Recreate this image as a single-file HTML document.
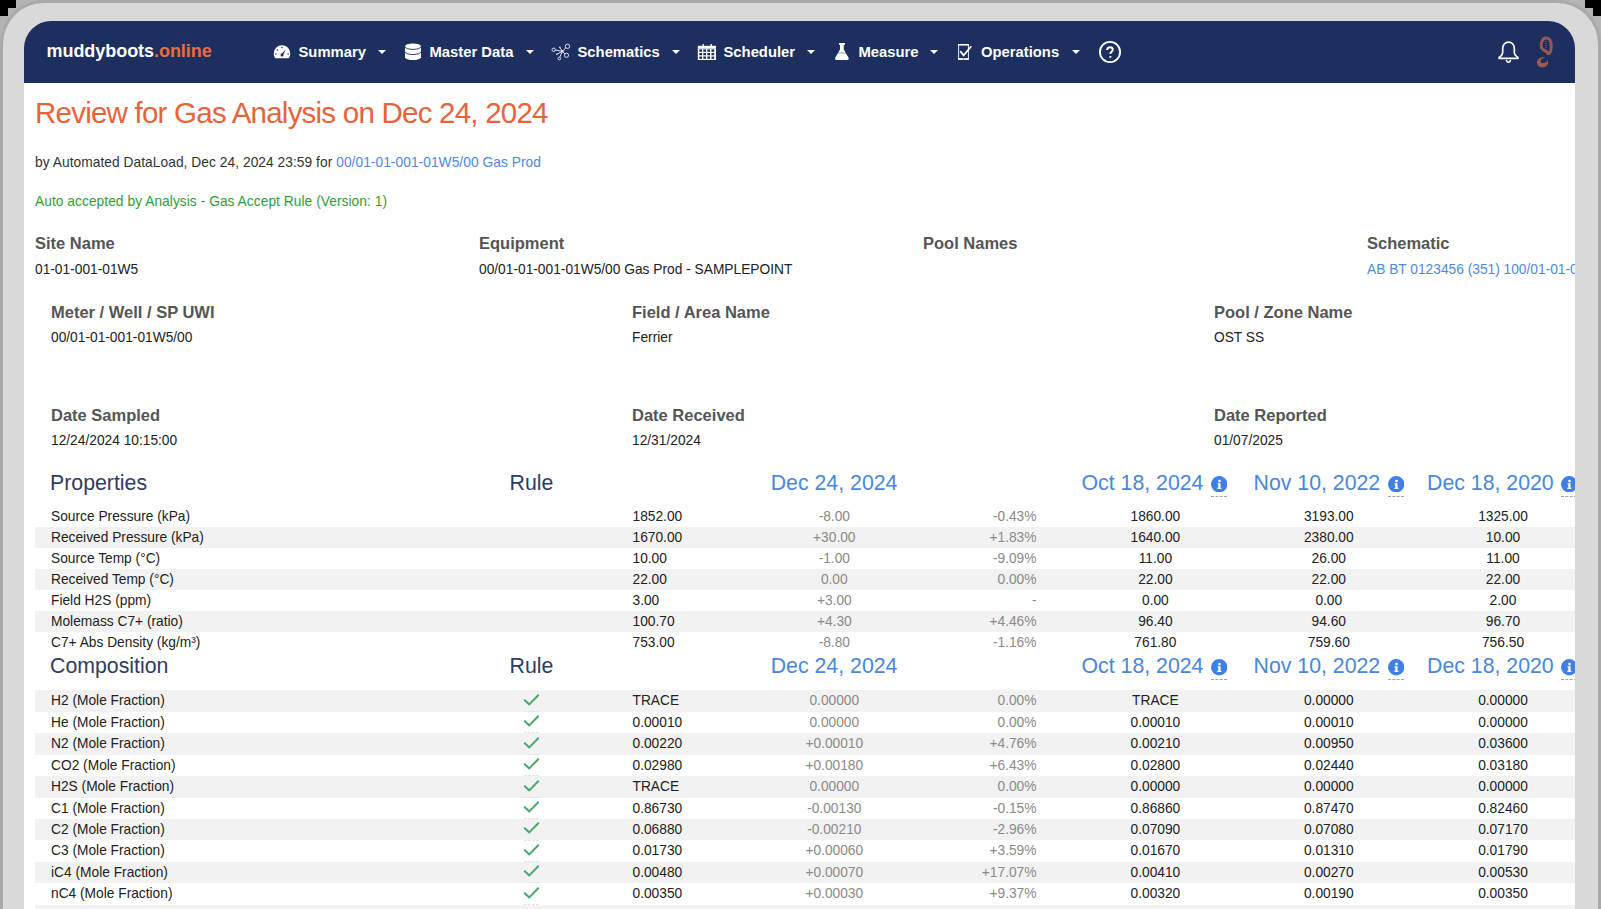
<!DOCTYPE html>
<html><head><meta charset="utf-8">
<style>
html,body{margin:0;padding:0;width:1601px;height:909px;overflow:hidden;background:#b4b4b4;}
body{position:relative;font-family:"Liberation Sans",sans-serif;}
.cornerTL{position:absolute;left:0;top:0;width:16px;height:8px;background:#000}
.frame{position:absolute;left:0;top:0;width:1595px;height:1000px;border:3px solid #a9a9a9;border-bottom:none;border-radius:44px 44px 0 0;background:#d9d9d9;}
.content{position:absolute;left:24px;top:21px;width:1551px;height:900px;background:#fff;border-radius:27px 27px 0 0;overflow:hidden;}
.inner{position:absolute;left:-24px;top:-21px;width:1601px;height:930px;}
.hdr{position:absolute;left:24px;top:21px;width:1551px;height:62px;background:#1d2f5e;}
.t{position:absolute;white-space:nowrap;}
.caret{position:absolute;width:0;height:0;border-left:4px solid transparent;border-right:4px solid transparent;border-top:4.5px solid #fff;}
.ic{position:absolute;}
.stripe{position:absolute;left:35px;width:1540px;background:#f2f2f2;}
.info{position:absolute;width:16px;height:16px;border-radius:50%;background:#4a86e0;color:#fff;font-weight:bold;font-size:11px;line-height:16px;text-align:center;font-family:"Liberation Serif",serif;}
.dots{position:absolute;width:16px;height:0;border-top:1px dashed #9aa;}
.dots2{position:absolute;width:15px;height:0;border-top:1px dashed #e6e6e6;}
</style></head><body>
<div class="cornerTL"></div>
<div style="position:absolute;left:0;top:0;width:8px;height:16px;background:#000"></div>
<div style="position:absolute;right:0;top:0;width:16px;height:8px;background:#000"></div>
<div style="position:absolute;right:0;top:0;width:8px;height:16px;background:#000"></div>
<div class="frame"></div>
<div class="content"><div class="inner">
<div class="hdr"></div>
<div class="t" style="top:42.26px;font-size:18px;line-height:18px;color:#fff;font-weight:bold;letter-spacing:-0.05px;left:46.5px;">muddyboots<span style="color:#ec6a3c">.online</span></div>
<div class="t" style="top:45.17px;font-size:14.8px;line-height:14.8px;color:#fff;font-weight:bold;left:298.5px;">Summary</div>
<div class="t" style="top:45.17px;font-size:14.8px;line-height:14.8px;color:#fff;font-weight:bold;left:429.5px;">Master Data</div>
<div class="t" style="top:45.17px;font-size:14.8px;line-height:14.8px;color:#fff;font-weight:bold;left:577.5px;">Schematics</div>
<div class="t" style="top:45.17px;font-size:14.8px;line-height:14.8px;color:#fff;font-weight:bold;left:723.5px;">Scheduler</div>
<div class="t" style="top:45.17px;font-size:14.8px;line-height:14.8px;color:#fff;font-weight:bold;left:858.5px;">Measure</div>
<div class="t" style="top:45.17px;font-size:14.8px;line-height:14.8px;color:#fff;font-weight:bold;left:981px;">Operations</div>
<div class="caret" style="left:378px;top:50px"></div>
<div class="caret" style="left:525.75px;top:50px"></div>
<div class="caret" style="left:672px;top:50px"></div>
<div class="caret" style="left:807px;top:50px"></div>
<div class="caret" style="left:930px;top:50px"></div>
<div class="caret" style="left:1072px;top:50px"></div>
<svg class="ic" style="left:273px;top:44px" width="18" height="16" viewBox="0 0 18 16">
<path d="M9 1.2A8.2 8.2 0 0 0 0.8 9.4c0 1.8.5 3.4 1.5 4.8H15.7c1-1.4 1.5-3 1.5-4.8A8.2 8.2 0 0 0 9 1.2z" fill="#fff"/>
<path d="M8 10.6 L12.6 5.4 L10 11.6z" fill="#1d2f5e"/>
<circle cx="9" cy="11" r="1.5" fill="#1d2f5e"/>
<circle cx="4.3" cy="6" r="0.75" fill="#1d2f5e"/><circle cx="9" cy="3.6" r="0.75" fill="#1d2f5e"/><circle cx="2.9" cy="10" r="0.75" fill="#1d2f5e"/><circle cx="15.1" cy="10" r="0.75" fill="#1d2f5e"/>
</svg>
<svg class="ic" style="left:405px;top:43px" width="16" height="18" viewBox="0 0 16 18">
<path d="M0 3.3A8 2.9 0 0 1 16 3.3V14.2A8 2.9 0 0 1 0 14.2Z" fill="#fff"/>
<path d="M0 3.6A8 2.8 0 0 0 16 3.6M0 8.7A8 2.8 0 0 0 16 8.7" fill="none" stroke="#1d2f5e" stroke-width="0.9"/>
</svg>
<svg class="ic" style="left:551px;top:43px" width="20" height="18" viewBox="0 0 20 18" fill="none" stroke="#dde5f5" stroke-width="0.95">
<circle cx="2.7" cy="6.8" r="1.7"/><circle cx="16.5" cy="3.3" r="2.2"/><circle cx="15.5" cy="12.3" r="2.1"/><circle cx="8.3" cy="15.5" r="1.35"/>
<path d="M4.4 7 L11.4 8.3 M11.4 8.3 L14.9 4.8 M11.4 8.3 L13.9 10.9 M11.4 8.3 L8.8 14.1 M11.4 8.3 L9 4.6 M11.4 8.3 L5.8 11.3"/>
<circle cx="11.4" cy="8.3" r="1.2" fill="#dde5f5" stroke="none"/>
<circle cx="8.9" cy="4.4" r="0.8" fill="#dde5f5" stroke="none"/><circle cx="5.7" cy="11.3" r="0.8" fill="#dde5f5" stroke="none"/>
</svg>
<svg class="ic" style="left:697px;top:43px" width="20" height="18" viewBox="0 0 20 18">
<rect x="0.8" y="2.8" width="18.2" height="14.2" fill="#fff"/>
<rect x="5.5" y="1" width="1.5" height="2" fill="#dfe6f3"/><rect x="13.5" y="1" width="1.5" height="2" fill="#dfe6f3"/>
<g fill="#1d2f5e">
<rect x="2.3" y="6.4" width="2.7" height="2.4"/><rect x="6.3" y="6.4" width="2.7" height="2.4"/><rect x="10.3" y="6.4" width="2.7" height="2.4"/><rect x="14.5" y="6.4" width="2.7" height="2.4"/>
<rect x="2.3" y="10" width="2.7" height="2.3"/><rect x="6.3" y="10" width="2.7" height="2.3"/><rect x="10.3" y="10" width="2.7" height="2.3"/><rect x="14.5" y="10" width="2.7" height="2.3"/>
<rect x="2.3" y="13.5" width="2.7" height="2.3"/><rect x="6.3" y="13.5" width="2.7" height="2.3"/><rect x="10.3" y="13.5" width="2.7" height="2.3"/><rect x="14.5" y="13.5" width="2.7" height="2.3"/>
</g>
<rect x="0.8" y="5" width="18.2" height="0.5" fill="#9aa6c0"/>
</svg>
<svg class="ic" style="left:830px;top:40px" width="26" height="24" viewBox="0 0 26 24">
<path d="M9 2.9H15V4.7H13.8V9.4L18.4 17.6C19.1 18.9 18.8 19.9 17.4 19.9H6.4C5 19.9 4.7 18.9 5.4 17.6L10 9.4V4.7H9Z" fill="#fff"/>
<path d="M8 13 Q12 12.4 16 13.4" fill="none" stroke="#1d2f5e" stroke-width="0.6" opacity="0.8"/>
</svg>
<svg class="ic" style="left:956px;top:43px" width="18" height="18" viewBox="0 0 18 18">
<rect x="2.6" y="1.6" width="9.8" height="14.6" fill="none" stroke="#e6ecf7" stroke-width="1"/>
<rect x="2.1" y="1" width="10.8" height="1.5" fill="#fff"/>
<rect x="2.1" y="15.2" width="10.8" height="1.6" fill="#fff"/>
<rect x="7.3" y="15.2" width="0.5" height="1.6" fill="#1d2f5e"/>
<path d="M4.2 8.1L7.6 12.3L15.3 3.2" fill="none" stroke="#fff" stroke-width="1.7"/>
</svg>
<svg class="ic" style="left:1098px;top:40px" width="24" height="24" viewBox="0 0 24 24">
<circle cx="12" cy="12" r="10.1" fill="none" stroke="#fff" stroke-width="1.9"/>
<path d="M9.1 10.1C9.1 8.1 10.3 7.2 12 7.2C13.7 7.2 14.8 8.3 14.8 9.7C14.8 11.6 12.4 11.7 12.4 13.4V14" fill="none" stroke="#fff" stroke-width="1.9"/>
<rect x="11.4" y="16" width="1.9" height="1.8" fill="#fff"/>
</svg>
<svg class="ic" style="left:1497px;top:40px" width="23" height="25" viewBox="0 0 23 25">
<path d="M11.5 2.2c-3.6 0-5.8 2.7-5.8 6.4v3.5c0 2.3-1 3.9-3.7 5.3v.9h19v-.9c-2.7-1.4-3.7-3-3.7-5.3V8.6c0-3.7-2.2-6.4-5.8-6.4z" fill="none" stroke="#fff" stroke-width="1.7" stroke-linejoin="round"/>
<path d="M9.6 20.6c.3 1.1 1 1.6 1.9 1.6s1.6-.5 1.9-1.6" fill="none" stroke="#fff" stroke-width="1.6" stroke-linecap="round"/>
</svg>
<svg class="ic" style="left:1535px;top:35px" width="20" height="34" viewBox="0 0 20 34">
<path d="M11 3C14.3 3 16.2 6.3 16.2 10.4C16.2 14.2 15.5 17.6 14.1 18.4C13.1 19 12.3 17.6 11.6 16.8C10.6 15.9 6.8 14.9 6.2 11.7C5.7 7.6 7.6 3 11 3Z" fill="none" stroke="#a9594f" stroke-width="2.9"/>
<path d="M11 3C14.3 3 16.2 6.3 16.2 10.4C16.2 14.2 15.5 17.6 14.1 18.4C13.1 19 12.3 17.6 11.6 16.8C10.6 15.9 6.8 14.9 6.2 11.7C5.7 7.6 7.6 3 11 3Z" fill="none" stroke="#1d2f5e" stroke-width="0.7" stroke-dasharray="0.8 1.6" opacity="0.8"/>
<path d="M10.9 6V15" stroke="#5a5470" stroke-width="1.6" stroke-dasharray="1 1"/>
<ellipse cx="7.5" cy="27.3" rx="5.6" ry="5.1" fill="#aa5b4d"/>
<ellipse cx="8.8" cy="25.6" rx="3.4" ry="2.4" fill="#1d2f5e" transform="rotate(-25 8.8 25.6)"/>
<ellipse cx="7.5" cy="27.3" rx="4.3" ry="3.9" fill="none" stroke="#1d2f5e" stroke-width="0.6" stroke-dasharray="0.8 1.4" opacity="0.7"/>
</svg>
<div class="t" style="top:98.03px;font-size:29.5px;line-height:29.5px;color:#e8633a;letter-spacing:-0.77px;left:35px;">Review for Gas Analysis on Dec 24, 2024</div>
<div class="t" style="top:155.56px;font-size:13.75px;line-height:13.75px;color:#333;letter-spacing:0.05px;left:35px;">by Automated DataLoad, Dec 24, 2024 23:59 for <span style="color:#4d8ae0">00/01-01-001-01W5/00 Gas Prod</span></div>
<div class="t" style="top:194.66px;font-size:13.75px;line-height:13.75px;color:#2e9e3a;letter-spacing:0.05px;left:35px;">Auto accepted by Analysis - Gas Accept Rule (Version: 1)</div>
<div class="t" style="top:235.03px;font-size:16.5px;line-height:16.5px;color:#555;font-weight:bold;left:35px;">Site Name</div>
<div class="t" style="top:262.86px;font-size:13.75px;line-height:13.75px;color:#222;left:35px;">01-01-001-01W5</div>
<div class="t" style="top:235.03px;font-size:16.5px;line-height:16.5px;color:#555;font-weight:bold;left:479px;">Equipment</div>
<div class="t" style="top:262.86px;font-size:13.75px;line-height:13.75px;color:#222;left:479px;">00/01-01-001-01W5/00 Gas Prod - SAMPLEPOINT</div>
<div class="t" style="top:235.03px;font-size:16.5px;line-height:16.5px;color:#555;font-weight:bold;left:923px;">Pool Names</div>
<div class="t" style="top:235.03px;font-size:16.5px;line-height:16.5px;color:#555;font-weight:bold;left:1367px;">Schematic</div>
<div class="t" style="top:262.86px;font-size:13.75px;line-height:13.75px;color:#4d8ae0;left:1367px;">AB BT 0123456 (351) 100/01-01-001-01W5/00 Gas Prod</div>
<div class="t" style="top:303.78px;font-size:16.5px;line-height:16.5px;color:#555;font-weight:bold;left:51px;">Meter / Well / SP UWI</div>
<div class="t" style="top:331.36px;font-size:13.75px;line-height:13.75px;color:#222;left:51px;">00/01-01-001-01W5/00</div>
<div class="t" style="top:303.78px;font-size:16.5px;line-height:16.5px;color:#555;font-weight:bold;left:632px;">Field / Area Name</div>
<div class="t" style="top:331.36px;font-size:13.75px;line-height:13.75px;color:#222;left:632px;">Ferrier</div>
<div class="t" style="top:303.78px;font-size:16.5px;line-height:16.5px;color:#555;font-weight:bold;left:1214px;">Pool / Zone Name</div>
<div class="t" style="top:331.36px;font-size:13.75px;line-height:13.75px;color:#222;left:1214px;">OST SS</div>
<div class="t" style="top:407.03px;font-size:16.5px;line-height:16.5px;color:#555;font-weight:bold;left:51px;">Date Sampled</div>
<div class="t" style="top:434.36px;font-size:13.75px;line-height:13.75px;color:#222;left:51px;">12/24/2024 10:15:00</div>
<div class="t" style="top:407.03px;font-size:16.5px;line-height:16.5px;color:#555;font-weight:bold;left:632px;">Date Received</div>
<div class="t" style="top:434.36px;font-size:13.75px;line-height:13.75px;color:#222;left:632px;">12/31/2024</div>
<div class="t" style="top:407.03px;font-size:16.5px;line-height:16.5px;color:#555;font-weight:bold;left:1214px;">Date Reported</div>
<div class="t" style="top:434.36px;font-size:13.75px;line-height:13.75px;color:#222;left:1214px;">01/07/2025</div>
<div class="t" style="top:472.57px;font-size:21.3px;line-height:21.3px;color:#2f3c62;left:50px;">Properties</div>
<div class="t" style="top:472.57px;font-size:21.3px;line-height:21.3px;color:#2f3c62;left:509.5px;">Rule</div>
<div class="t" style="top:472.57px;font-size:21.3px;line-height:21.3px;color:#4a86dc;left:534.1px;width:600px;text-align:center;">Dec 24, 2024</div>
<div class="t" style="top:472.57px;font-size:21.3px;line-height:21.3px;color:#4a86dc;left:1081.5px;">Oct 18, 2024</div>
<svg class="ic" style="left:1211px;top:476.10px" width="16.4" height="16.4" viewBox="0 0 16 16"><circle cx="8" cy="8" r="8" fill="#4080e6"/><circle cx="8.3" cy="4.9" r="1.35" fill="#fff"/><path d="M6.3 7H9.3V11.5H10.1V12.6H6.2V11.5H7.1V8.1H6.3Z" fill="#fff"/></svg>
<div class="dots" style="left:1211px;top:496.10px"></div>
<div class="t" style="top:472.57px;font-size:21.3px;line-height:21.3px;color:#4a86dc;left:1253.5px;">Nov 10, 2022</div>
<svg class="ic" style="left:1387.5px;top:476.10px" width="16.4" height="16.4" viewBox="0 0 16 16"><circle cx="8" cy="8" r="8" fill="#4080e6"/><circle cx="8.3" cy="4.9" r="1.35" fill="#fff"/><path d="M6.3 7H9.3V11.5H10.1V12.6H6.2V11.5H7.1V8.1H6.3Z" fill="#fff"/></svg>
<div class="dots" style="left:1387.5px;top:496.10px"></div>
<div class="t" style="top:472.57px;font-size:21.3px;line-height:21.3px;color:#4a86dc;left:1427px;">Dec 18, 2020</div>
<svg class="ic" style="left:1561px;top:476.10px" width="16.4" height="16.4" viewBox="0 0 16 16"><circle cx="8" cy="8" r="8" fill="#4080e6"/><circle cx="8.3" cy="4.9" r="1.35" fill="#fff"/><path d="M6.3 7H9.3V11.5H10.1V12.6H6.2V11.5H7.1V8.1H6.3Z" fill="#fff"/></svg>
<div class="dots" style="left:1561px;top:496.10px"></div>
<div class="t" style="top:509.96px;font-size:13.75px;line-height:13.75px;color:#222;left:51px;">Source Pressure (kPa)</div>
<div class="t" style="top:509.96px;font-size:13.75px;line-height:13.75px;color:#222;left:632.5px;">1852.00</div>
<div class="t" style="top:509.96px;font-size:13.75px;line-height:13.75px;color:#8a8a8a;left:534.3px;width:600px;text-align:center;">-8.00</div>
<div class="t" style="top:509.96px;font-size:13.75px;line-height:13.75px;color:#8a8a8a;left:436.5px;width:600px;text-align:right;">-0.43%</div>
<div class="t" style="top:509.96px;font-size:13.75px;line-height:13.75px;color:#222;left:855.4000000000001px;width:600px;text-align:center;">1860.00</div>
<div class="t" style="top:509.96px;font-size:13.75px;line-height:13.75px;color:#222;left:1028.8px;width:600px;text-align:center;">3193.00</div>
<div class="t" style="top:509.96px;font-size:13.75px;line-height:13.75px;color:#222;left:1203px;width:600px;text-align:center;">1325.00</div>
<div class="stripe" style="top:527.00px;height:21.00px"></div>
<div class="t" style="top:530.96px;font-size:13.75px;line-height:13.75px;color:#222;left:51px;">Received Pressure (kPa)</div>
<div class="t" style="top:530.96px;font-size:13.75px;line-height:13.75px;color:#222;left:632.5px;">1670.00</div>
<div class="t" style="top:530.96px;font-size:13.75px;line-height:13.75px;color:#8a8a8a;left:534.3px;width:600px;text-align:center;">+30.00</div>
<div class="t" style="top:530.96px;font-size:13.75px;line-height:13.75px;color:#8a8a8a;left:436.5px;width:600px;text-align:right;">+1.83%</div>
<div class="t" style="top:530.96px;font-size:13.75px;line-height:13.75px;color:#222;left:855.4000000000001px;width:600px;text-align:center;">1640.00</div>
<div class="t" style="top:530.96px;font-size:13.75px;line-height:13.75px;color:#222;left:1028.8px;width:600px;text-align:center;">2380.00</div>
<div class="t" style="top:530.96px;font-size:13.75px;line-height:13.75px;color:#222;left:1203px;width:600px;text-align:center;">10.00</div>
<div class="t" style="top:551.96px;font-size:13.75px;line-height:13.75px;color:#222;left:51px;">Source Temp (°C)</div>
<div class="t" style="top:551.96px;font-size:13.75px;line-height:13.75px;color:#222;left:632.5px;">10.00</div>
<div class="t" style="top:551.96px;font-size:13.75px;line-height:13.75px;color:#8a8a8a;left:534.3px;width:600px;text-align:center;">-1.00</div>
<div class="t" style="top:551.96px;font-size:13.75px;line-height:13.75px;color:#8a8a8a;left:436.5px;width:600px;text-align:right;">-9.09%</div>
<div class="t" style="top:551.96px;font-size:13.75px;line-height:13.75px;color:#222;left:855.4000000000001px;width:600px;text-align:center;">11.00</div>
<div class="t" style="top:551.96px;font-size:13.75px;line-height:13.75px;color:#222;left:1028.8px;width:600px;text-align:center;">26.00</div>
<div class="t" style="top:551.96px;font-size:13.75px;line-height:13.75px;color:#222;left:1203px;width:600px;text-align:center;">11.00</div>
<div class="stripe" style="top:569.00px;height:21.00px"></div>
<div class="t" style="top:572.96px;font-size:13.75px;line-height:13.75px;color:#222;left:51px;">Received Temp (°C)</div>
<div class="t" style="top:572.96px;font-size:13.75px;line-height:13.75px;color:#222;left:632.5px;">22.00</div>
<div class="t" style="top:572.96px;font-size:13.75px;line-height:13.75px;color:#8a8a8a;left:534.3px;width:600px;text-align:center;">0.00</div>
<div class="t" style="top:572.96px;font-size:13.75px;line-height:13.75px;color:#8a8a8a;left:436.5px;width:600px;text-align:right;">0.00%</div>
<div class="t" style="top:572.96px;font-size:13.75px;line-height:13.75px;color:#222;left:855.4000000000001px;width:600px;text-align:center;">22.00</div>
<div class="t" style="top:572.96px;font-size:13.75px;line-height:13.75px;color:#222;left:1028.8px;width:600px;text-align:center;">22.00</div>
<div class="t" style="top:572.96px;font-size:13.75px;line-height:13.75px;color:#222;left:1203px;width:600px;text-align:center;">22.00</div>
<div class="t" style="top:593.96px;font-size:13.75px;line-height:13.75px;color:#222;left:51px;">Field H2S (ppm)</div>
<div class="t" style="top:593.96px;font-size:13.75px;line-height:13.75px;color:#222;left:632.5px;">3.00</div>
<div class="t" style="top:593.96px;font-size:13.75px;line-height:13.75px;color:#8a8a8a;left:534.3px;width:600px;text-align:center;">+3.00</div>
<div class="t" style="top:593.96px;font-size:13.75px;line-height:13.75px;color:#8a8a8a;left:436.5px;width:600px;text-align:right;">-</div>
<div class="t" style="top:593.96px;font-size:13.75px;line-height:13.75px;color:#222;left:855.4000000000001px;width:600px;text-align:center;">0.00</div>
<div class="t" style="top:593.96px;font-size:13.75px;line-height:13.75px;color:#222;left:1028.8px;width:600px;text-align:center;">0.00</div>
<div class="t" style="top:593.96px;font-size:13.75px;line-height:13.75px;color:#222;left:1203px;width:600px;text-align:center;">2.00</div>
<div class="stripe" style="top:611.00px;height:21.00px"></div>
<div class="t" style="top:614.96px;font-size:13.75px;line-height:13.75px;color:#222;left:51px;">Molemass C7+ (ratio)</div>
<div class="t" style="top:614.96px;font-size:13.75px;line-height:13.75px;color:#222;left:632.5px;">100.70</div>
<div class="t" style="top:614.96px;font-size:13.75px;line-height:13.75px;color:#8a8a8a;left:534.3px;width:600px;text-align:center;">+4.30</div>
<div class="t" style="top:614.96px;font-size:13.75px;line-height:13.75px;color:#8a8a8a;left:436.5px;width:600px;text-align:right;">+4.46%</div>
<div class="t" style="top:614.96px;font-size:13.75px;line-height:13.75px;color:#222;left:855.4000000000001px;width:600px;text-align:center;">96.40</div>
<div class="t" style="top:614.96px;font-size:13.75px;line-height:13.75px;color:#222;left:1028.8px;width:600px;text-align:center;">94.60</div>
<div class="t" style="top:614.96px;font-size:13.75px;line-height:13.75px;color:#222;left:1203px;width:600px;text-align:center;">96.70</div>
<div class="t" style="top:635.96px;font-size:13.75px;line-height:13.75px;color:#222;left:51px;">C7+ Abs Density (kg/m³)</div>
<div class="t" style="top:635.96px;font-size:13.75px;line-height:13.75px;color:#222;left:632.5px;">753.00</div>
<div class="t" style="top:635.96px;font-size:13.75px;line-height:13.75px;color:#8a8a8a;left:534.3px;width:600px;text-align:center;">-8.80</div>
<div class="t" style="top:635.96px;font-size:13.75px;line-height:13.75px;color:#8a8a8a;left:436.5px;width:600px;text-align:right;">-1.16%</div>
<div class="t" style="top:635.96px;font-size:13.75px;line-height:13.75px;color:#222;left:855.4000000000001px;width:600px;text-align:center;">761.80</div>
<div class="t" style="top:635.96px;font-size:13.75px;line-height:13.75px;color:#222;left:1028.8px;width:600px;text-align:center;">759.60</div>
<div class="t" style="top:635.96px;font-size:13.75px;line-height:13.75px;color:#222;left:1203px;width:600px;text-align:center;">756.50</div>
<div class="t" style="top:655.72px;font-size:21.3px;line-height:21.3px;color:#2f3c62;left:50px;">Composition</div>
<div class="t" style="top:655.72px;font-size:21.3px;line-height:21.3px;color:#2f3c62;left:509.5px;">Rule</div>
<div class="t" style="top:655.72px;font-size:21.3px;line-height:21.3px;color:#4a86dc;left:534.1px;width:600px;text-align:center;">Dec 24, 2024</div>
<div class="t" style="top:655.72px;font-size:21.3px;line-height:21.3px;color:#4a86dc;left:1081.5px;">Oct 18, 2024</div>
<svg class="ic" style="left:1211px;top:659.25px" width="16.4" height="16.4" viewBox="0 0 16 16"><circle cx="8" cy="8" r="8" fill="#4080e6"/><circle cx="8.3" cy="4.9" r="1.35" fill="#fff"/><path d="M6.3 7H9.3V11.5H10.1V12.6H6.2V11.5H7.1V8.1H6.3Z" fill="#fff"/></svg>
<div class="dots" style="left:1211px;top:679.25px"></div>
<div class="t" style="top:655.72px;font-size:21.3px;line-height:21.3px;color:#4a86dc;left:1253.5px;">Nov 10, 2022</div>
<svg class="ic" style="left:1387.5px;top:659.25px" width="16.4" height="16.4" viewBox="0 0 16 16"><circle cx="8" cy="8" r="8" fill="#4080e6"/><circle cx="8.3" cy="4.9" r="1.35" fill="#fff"/><path d="M6.3 7H9.3V11.5H10.1V12.6H6.2V11.5H7.1V8.1H6.3Z" fill="#fff"/></svg>
<div class="dots" style="left:1387.5px;top:679.25px"></div>
<div class="t" style="top:655.72px;font-size:21.3px;line-height:21.3px;color:#4a86dc;left:1427px;">Dec 18, 2020</div>
<svg class="ic" style="left:1561px;top:659.25px" width="16.4" height="16.4" viewBox="0 0 16 16"><circle cx="8" cy="8" r="8" fill="#4080e6"/><circle cx="8.3" cy="4.9" r="1.35" fill="#fff"/><path d="M6.3 7H9.3V11.5H10.1V12.6H6.2V11.5H7.1V8.1H6.3Z" fill="#fff"/></svg>
<div class="dots" style="left:1561px;top:679.25px"></div>
<div class="stripe" style="top:690.30px;height:21.45px"></div>
<div class="t" style="top:694.26px;font-size:13.75px;line-height:13.75px;color:#222;left:51px;">H2 (Mole Fraction)</div>
<div class="t" style="top:694.26px;font-size:13.75px;line-height:13.75px;color:#222;left:632.5px;">TRACE</div>
<div class="t" style="top:694.26px;font-size:13.75px;line-height:13.75px;color:#8a8a8a;left:534.3px;width:600px;text-align:center;">0.00000</div>
<div class="t" style="top:694.26px;font-size:13.75px;line-height:13.75px;color:#8a8a8a;left:436.5px;width:600px;text-align:right;">0.00%</div>
<div class="t" style="top:694.26px;font-size:13.75px;line-height:13.75px;color:#222;left:855.4000000000001px;width:600px;text-align:center;">TRACE</div>
<div class="t" style="top:694.26px;font-size:13.75px;line-height:13.75px;color:#222;left:1028.8px;width:600px;text-align:center;">0.00000</div>
<div class="t" style="top:694.26px;font-size:13.75px;line-height:13.75px;color:#222;left:1203px;width:600px;text-align:center;">0.00000</div>
<svg class="ic" style="left:523px;top:692.70px" width="17" height="14" viewBox="0 0 17 14"><path d="M1.8 7.2 L6.3 11.4 L15.2 2.2" fill="none" stroke="#46a96c" stroke-width="2" stroke-linecap="round" stroke-linejoin="round"/></svg>
<div class="dots2" style="left:524px;top:710.80px"></div>
<div class="t" style="top:715.71px;font-size:13.75px;line-height:13.75px;color:#222;left:51px;">He (Mole Fraction)</div>
<div class="t" style="top:715.71px;font-size:13.75px;line-height:13.75px;color:#222;left:632.5px;">0.00010</div>
<div class="t" style="top:715.71px;font-size:13.75px;line-height:13.75px;color:#8a8a8a;left:534.3px;width:600px;text-align:center;">0.00000</div>
<div class="t" style="top:715.71px;font-size:13.75px;line-height:13.75px;color:#8a8a8a;left:436.5px;width:600px;text-align:right;">0.00%</div>
<div class="t" style="top:715.71px;font-size:13.75px;line-height:13.75px;color:#222;left:855.4000000000001px;width:600px;text-align:center;">0.00010</div>
<div class="t" style="top:715.71px;font-size:13.75px;line-height:13.75px;color:#222;left:1028.8px;width:600px;text-align:center;">0.00010</div>
<div class="t" style="top:715.71px;font-size:13.75px;line-height:13.75px;color:#222;left:1203px;width:600px;text-align:center;">0.00000</div>
<svg class="ic" style="left:523px;top:714.15px" width="17" height="14" viewBox="0 0 17 14"><path d="M1.8 7.2 L6.3 11.4 L15.2 2.2" fill="none" stroke="#46a96c" stroke-width="2" stroke-linecap="round" stroke-linejoin="round"/></svg>
<div class="dots2" style="left:524px;top:732.25px"></div>
<div class="stripe" style="top:733.20px;height:21.45px"></div>
<div class="t" style="top:737.16px;font-size:13.75px;line-height:13.75px;color:#222;left:51px;">N2 (Mole Fraction)</div>
<div class="t" style="top:737.16px;font-size:13.75px;line-height:13.75px;color:#222;left:632.5px;">0.00220</div>
<div class="t" style="top:737.16px;font-size:13.75px;line-height:13.75px;color:#8a8a8a;left:534.3px;width:600px;text-align:center;">+0.00010</div>
<div class="t" style="top:737.16px;font-size:13.75px;line-height:13.75px;color:#8a8a8a;left:436.5px;width:600px;text-align:right;">+4.76%</div>
<div class="t" style="top:737.16px;font-size:13.75px;line-height:13.75px;color:#222;left:855.4000000000001px;width:600px;text-align:center;">0.00210</div>
<div class="t" style="top:737.16px;font-size:13.75px;line-height:13.75px;color:#222;left:1028.8px;width:600px;text-align:center;">0.00950</div>
<div class="t" style="top:737.16px;font-size:13.75px;line-height:13.75px;color:#222;left:1203px;width:600px;text-align:center;">0.03600</div>
<svg class="ic" style="left:523px;top:735.60px" width="17" height="14" viewBox="0 0 17 14"><path d="M1.8 7.2 L6.3 11.4 L15.2 2.2" fill="none" stroke="#46a96c" stroke-width="2" stroke-linecap="round" stroke-linejoin="round"/></svg>
<div class="dots2" style="left:524px;top:753.70px"></div>
<div class="t" style="top:758.61px;font-size:13.75px;line-height:13.75px;color:#222;left:51px;">CO2 (Mole Fraction)</div>
<div class="t" style="top:758.61px;font-size:13.75px;line-height:13.75px;color:#222;left:632.5px;">0.02980</div>
<div class="t" style="top:758.61px;font-size:13.75px;line-height:13.75px;color:#8a8a8a;left:534.3px;width:600px;text-align:center;">+0.00180</div>
<div class="t" style="top:758.61px;font-size:13.75px;line-height:13.75px;color:#8a8a8a;left:436.5px;width:600px;text-align:right;">+6.43%</div>
<div class="t" style="top:758.61px;font-size:13.75px;line-height:13.75px;color:#222;left:855.4000000000001px;width:600px;text-align:center;">0.02800</div>
<div class="t" style="top:758.61px;font-size:13.75px;line-height:13.75px;color:#222;left:1028.8px;width:600px;text-align:center;">0.02440</div>
<div class="t" style="top:758.61px;font-size:13.75px;line-height:13.75px;color:#222;left:1203px;width:600px;text-align:center;">0.03180</div>
<svg class="ic" style="left:523px;top:757.05px" width="17" height="14" viewBox="0 0 17 14"><path d="M1.8 7.2 L6.3 11.4 L15.2 2.2" fill="none" stroke="#46a96c" stroke-width="2" stroke-linecap="round" stroke-linejoin="round"/></svg>
<div class="dots2" style="left:524px;top:775.15px"></div>
<div class="stripe" style="top:776.10px;height:21.45px"></div>
<div class="t" style="top:780.06px;font-size:13.75px;line-height:13.75px;color:#222;left:51px;">H2S (Mole Fraction)</div>
<div class="t" style="top:780.06px;font-size:13.75px;line-height:13.75px;color:#222;left:632.5px;">TRACE</div>
<div class="t" style="top:780.06px;font-size:13.75px;line-height:13.75px;color:#8a8a8a;left:534.3px;width:600px;text-align:center;">0.00000</div>
<div class="t" style="top:780.06px;font-size:13.75px;line-height:13.75px;color:#8a8a8a;left:436.5px;width:600px;text-align:right;">0.00%</div>
<div class="t" style="top:780.06px;font-size:13.75px;line-height:13.75px;color:#222;left:855.4000000000001px;width:600px;text-align:center;">0.00000</div>
<div class="t" style="top:780.06px;font-size:13.75px;line-height:13.75px;color:#222;left:1028.8px;width:600px;text-align:center;">0.00000</div>
<div class="t" style="top:780.06px;font-size:13.75px;line-height:13.75px;color:#222;left:1203px;width:600px;text-align:center;">0.00000</div>
<svg class="ic" style="left:523px;top:778.50px" width="17" height="14" viewBox="0 0 17 14"><path d="M1.8 7.2 L6.3 11.4 L15.2 2.2" fill="none" stroke="#46a96c" stroke-width="2" stroke-linecap="round" stroke-linejoin="round"/></svg>
<div class="dots2" style="left:524px;top:796.60px"></div>
<div class="t" style="top:801.51px;font-size:13.75px;line-height:13.75px;color:#222;left:51px;">C1 (Mole Fraction)</div>
<div class="t" style="top:801.51px;font-size:13.75px;line-height:13.75px;color:#222;left:632.5px;">0.86730</div>
<div class="t" style="top:801.51px;font-size:13.75px;line-height:13.75px;color:#8a8a8a;left:534.3px;width:600px;text-align:center;">-0.00130</div>
<div class="t" style="top:801.51px;font-size:13.75px;line-height:13.75px;color:#8a8a8a;left:436.5px;width:600px;text-align:right;">-0.15%</div>
<div class="t" style="top:801.51px;font-size:13.75px;line-height:13.75px;color:#222;left:855.4000000000001px;width:600px;text-align:center;">0.86860</div>
<div class="t" style="top:801.51px;font-size:13.75px;line-height:13.75px;color:#222;left:1028.8px;width:600px;text-align:center;">0.87470</div>
<div class="t" style="top:801.51px;font-size:13.75px;line-height:13.75px;color:#222;left:1203px;width:600px;text-align:center;">0.82460</div>
<svg class="ic" style="left:523px;top:799.95px" width="17" height="14" viewBox="0 0 17 14"><path d="M1.8 7.2 L6.3 11.4 L15.2 2.2" fill="none" stroke="#46a96c" stroke-width="2" stroke-linecap="round" stroke-linejoin="round"/></svg>
<div class="dots2" style="left:524px;top:818.05px"></div>
<div class="stripe" style="top:819.00px;height:21.45px"></div>
<div class="t" style="top:822.96px;font-size:13.75px;line-height:13.75px;color:#222;left:51px;">C2 (Mole Fraction)</div>
<div class="t" style="top:822.96px;font-size:13.75px;line-height:13.75px;color:#222;left:632.5px;">0.06880</div>
<div class="t" style="top:822.96px;font-size:13.75px;line-height:13.75px;color:#8a8a8a;left:534.3px;width:600px;text-align:center;">-0.00210</div>
<div class="t" style="top:822.96px;font-size:13.75px;line-height:13.75px;color:#8a8a8a;left:436.5px;width:600px;text-align:right;">-2.96%</div>
<div class="t" style="top:822.96px;font-size:13.75px;line-height:13.75px;color:#222;left:855.4000000000001px;width:600px;text-align:center;">0.07090</div>
<div class="t" style="top:822.96px;font-size:13.75px;line-height:13.75px;color:#222;left:1028.8px;width:600px;text-align:center;">0.07080</div>
<div class="t" style="top:822.96px;font-size:13.75px;line-height:13.75px;color:#222;left:1203px;width:600px;text-align:center;">0.07170</div>
<svg class="ic" style="left:523px;top:821.40px" width="17" height="14" viewBox="0 0 17 14"><path d="M1.8 7.2 L6.3 11.4 L15.2 2.2" fill="none" stroke="#46a96c" stroke-width="2" stroke-linecap="round" stroke-linejoin="round"/></svg>
<div class="dots2" style="left:524px;top:839.50px"></div>
<div class="t" style="top:844.41px;font-size:13.75px;line-height:13.75px;color:#222;left:51px;">C3 (Mole Fraction)</div>
<div class="t" style="top:844.41px;font-size:13.75px;line-height:13.75px;color:#222;left:632.5px;">0.01730</div>
<div class="t" style="top:844.41px;font-size:13.75px;line-height:13.75px;color:#8a8a8a;left:534.3px;width:600px;text-align:center;">+0.00060</div>
<div class="t" style="top:844.41px;font-size:13.75px;line-height:13.75px;color:#8a8a8a;left:436.5px;width:600px;text-align:right;">+3.59%</div>
<div class="t" style="top:844.41px;font-size:13.75px;line-height:13.75px;color:#222;left:855.4000000000001px;width:600px;text-align:center;">0.01670</div>
<div class="t" style="top:844.41px;font-size:13.75px;line-height:13.75px;color:#222;left:1028.8px;width:600px;text-align:center;">0.01310</div>
<div class="t" style="top:844.41px;font-size:13.75px;line-height:13.75px;color:#222;left:1203px;width:600px;text-align:center;">0.01790</div>
<svg class="ic" style="left:523px;top:842.85px" width="17" height="14" viewBox="0 0 17 14"><path d="M1.8 7.2 L6.3 11.4 L15.2 2.2" fill="none" stroke="#46a96c" stroke-width="2" stroke-linecap="round" stroke-linejoin="round"/></svg>
<div class="dots2" style="left:524px;top:860.95px"></div>
<div class="stripe" style="top:861.90px;height:21.45px"></div>
<div class="t" style="top:865.86px;font-size:13.75px;line-height:13.75px;color:#222;left:51px;">iC4 (Mole Fraction)</div>
<div class="t" style="top:865.86px;font-size:13.75px;line-height:13.75px;color:#222;left:632.5px;">0.00480</div>
<div class="t" style="top:865.86px;font-size:13.75px;line-height:13.75px;color:#8a8a8a;left:534.3px;width:600px;text-align:center;">+0.00070</div>
<div class="t" style="top:865.86px;font-size:13.75px;line-height:13.75px;color:#8a8a8a;left:436.5px;width:600px;text-align:right;">+17.07%</div>
<div class="t" style="top:865.86px;font-size:13.75px;line-height:13.75px;color:#222;left:855.4000000000001px;width:600px;text-align:center;">0.00410</div>
<div class="t" style="top:865.86px;font-size:13.75px;line-height:13.75px;color:#222;left:1028.8px;width:600px;text-align:center;">0.00270</div>
<div class="t" style="top:865.86px;font-size:13.75px;line-height:13.75px;color:#222;left:1203px;width:600px;text-align:center;">0.00530</div>
<svg class="ic" style="left:523px;top:864.30px" width="17" height="14" viewBox="0 0 17 14"><path d="M1.8 7.2 L6.3 11.4 L15.2 2.2" fill="none" stroke="#46a96c" stroke-width="2" stroke-linecap="round" stroke-linejoin="round"/></svg>
<div class="dots2" style="left:524px;top:882.40px"></div>
<div class="t" style="top:887.31px;font-size:13.75px;line-height:13.75px;color:#222;left:51px;">nC4 (Mole Fraction)</div>
<div class="t" style="top:887.31px;font-size:13.75px;line-height:13.75px;color:#222;left:632.5px;">0.00350</div>
<div class="t" style="top:887.31px;font-size:13.75px;line-height:13.75px;color:#8a8a8a;left:534.3px;width:600px;text-align:center;">+0.00030</div>
<div class="t" style="top:887.31px;font-size:13.75px;line-height:13.75px;color:#8a8a8a;left:436.5px;width:600px;text-align:right;">+9.37%</div>
<div class="t" style="top:887.31px;font-size:13.75px;line-height:13.75px;color:#222;left:855.4000000000001px;width:600px;text-align:center;">0.00320</div>
<div class="t" style="top:887.31px;font-size:13.75px;line-height:13.75px;color:#222;left:1028.8px;width:600px;text-align:center;">0.00190</div>
<div class="t" style="top:887.31px;font-size:13.75px;line-height:13.75px;color:#222;left:1203px;width:600px;text-align:center;">0.00350</div>
<svg class="ic" style="left:523px;top:885.75px" width="17" height="14" viewBox="0 0 17 14"><path d="M1.8 7.2 L6.3 11.4 L15.2 2.2" fill="none" stroke="#46a96c" stroke-width="2" stroke-linecap="round" stroke-linejoin="round"/></svg>
<div class="dots2" style="left:524px;top:903.85px"></div>
<div class="stripe" style="top:904.80px;height:21.45px"></div>
<div class="t" style="top:908.76px;font-size:13.75px;line-height:13.75px;color:#222;left:51px;"></div>
<div class="t" style="top:908.76px;font-size:13.75px;line-height:13.75px;color:#222;left:632.5px;"></div>
<div class="t" style="top:908.76px;font-size:13.75px;line-height:13.75px;color:#8a8a8a;left:534.3px;width:600px;text-align:center;"></div>
<div class="t" style="top:908.76px;font-size:13.75px;line-height:13.75px;color:#8a8a8a;left:436.5px;width:600px;text-align:right;"></div>
<div class="t" style="top:908.76px;font-size:13.75px;line-height:13.75px;color:#222;left:855.4000000000001px;width:600px;text-align:center;"></div>
<div class="t" style="top:908.76px;font-size:13.75px;line-height:13.75px;color:#222;left:1028.8px;width:600px;text-align:center;"></div>
<div class="t" style="top:908.76px;font-size:13.75px;line-height:13.75px;color:#222;left:1203px;width:600px;text-align:center;"></div>

</div></div>
</body></html>
